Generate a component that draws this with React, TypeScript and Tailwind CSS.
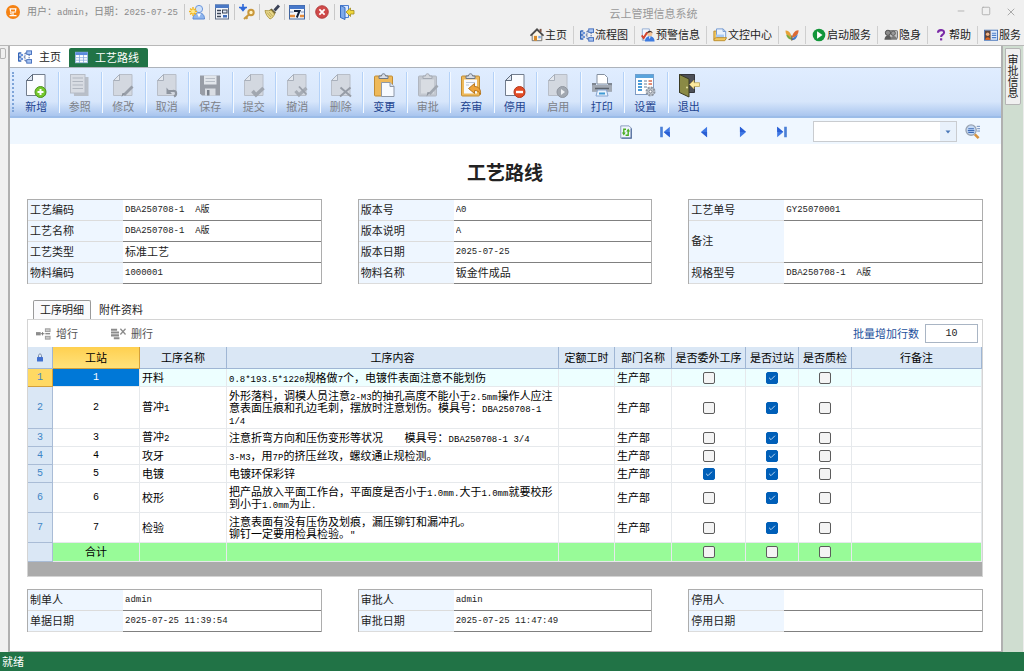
import type { ReactNode } from 'react'
import { clsx } from 'clsx'
import { Minus, Square, X, Check } from 'lucide-react'

interface Field {
  label: string
  value: string
  tall?: boolean
}

interface Process {
  station: number
  name: string
  content: string
  dept: string
  outsourced: boolean
  pass: boolean
  inspect: boolean
  height: string
}

const processes: Process[] = [
  { station: 1, name: '开料', content: '0.8*193.5*1220规格做7个，电镀件表面注意不能划伤', dept: '生产部', outsourced: false, pass: true, inspect: false, height: 'h-[18px]' },
  { station: 2, name: '普冲1', content: '外形落料，调模人员注意2-M3的抽孔高度不能小于2.5mm操作人应注\n意表面压痕和孔边毛刺，摆放时注意划伤。模具号：DBA250708-1\n1/4', dept: '生产部', outsourced: false, pass: true, inspect: false, height: 'h-[42px]' },
  { station: 3, name: '普冲2', content: '注意折弯方向和压伤变形等状况    模具号：DBA250708-1 3/4', dept: '生产部', outsourced: false, pass: true, inspect: false, height: 'h-[18px]' },
  { station: 4, name: '攻牙', content: '3-M3，用7P的挤压丝攻，螺纹通止规检测。', dept: '生产部', outsourced: false, pass: true, inspect: false, height: 'h-[18px]' },
  { station: 5, name: '电镀', content: '电镀环保彩锌', dept: '生产部', outsourced: true, pass: true, inspect: false, height: 'h-[18px]' },
  { station: 6, name: '校形', content: '把产品放入平面工作台，平面度是否小于1.0mm.大于1.0mm就要校形\n到小于1.0mm为止.', dept: '生产部', outsourced: false, pass: true, inspect: false, height: 'h-[30px]' },
  { station: 7, name: '检验', content: '注意表面有没有压伤及划痕，漏压铆钉和漏冲孔。\n铆钉一定要用检具检验。"', dept: '生产部', outsourced: false, pass: true, inspect: false, height: 'h-[30px]' },
]

const headFields: Field[][] = [
  [
    { label: '工艺编码', value: 'DBA250708-1  A版' },
    { label: '工艺名称', value: 'DBA250708-1  A版' },
    { label: '工艺类型', value: '标准工艺' },
    { label: '物料编码', value: '1000001' },
  ],
  [
    { label: '版本号', value: 'A0' },
    { label: '版本说明', value: 'A' },
    { label: '版本日期', value: '2025-07-25' },
    { label: '物料名称', value: '钣金件成品' },
  ],
  [
    { label: '工艺单号', value: 'GY25070001' },
    { label: '备注', value: '', tall: true },
    { label: '规格型号', value: 'DBA250708-1  A版' },
  ],
]

const footFields: Field[][] = [
  [
    { label: '制单人', value: 'admin' },
    { label: '单据日期', value: '2025-07-25 11:39:54' },
  ],
  [
    { label: '审批人', value: 'admin' },
    { label: '审批日期', value: '2025-07-25 11:47:49' },
  ],
  [
    { label: '停用人', value: '' },
    { label: '停用日期', value: '' },
  ],
]

/* Latin runs use the narrow fixed-width face */
function Mixed({ text }: { text: string }) {
  return (
    <>
      {text.split(/([\x20-\x7e]+)/).map((part, i) =>
        i % 2 === 1 ? (
          <span key={i} className="font-['Liberation_Mono',monospace] text-[9px] leading-none">{part}</span>
        ) : (
          part
        )
      )}
    </>
  )
}

/* ---------- small icons ---------- */

function Svg16({ children, className = 'size-4' }: { children: ReactNode; className?: string }) {
  return (
    <svg viewBox="0 0 16 16" className={clsx('shrink-0', className)} fill="none" aria-hidden="true">
      {children}
    </svg>
  )
}

function LogoIcon() {
  return (
    <Svg16 className="size-[14px]">
      <circle cx="8" cy="8" r="8" fill="#f58213" />
      <path d="M4 4.5h8M5 4.5v2.5M11 4.5v2.5M4.5 8h7M8 8v4M5 9.5l1.5 1M4 12.2h8" stroke="#fff" strokeWidth="1.3" />
    </Svg16>
  )
}

function FlowIcon() {
  return (
    <Svg16 className="size-[14px]">
      <path d="M.8 3v10M.8 3.500h3M.8 8h3M.8 12.500h3" stroke="#3465b8" strokeWidth="1.600" />
      <rect x="2.800" y="4.500" width="3" height="2.500" fill="#6a94dc" />
      <rect x="2.800" y="9" width="3" height="2.500" fill="#6a94dc" />
      <rect x="10" y="1" width="5.500" height="4" fill="#a9c6f4" stroke="#3a66b8" />
      <rect x="10" y="11" width="5.500" height="4" fill="#a9c6f4" stroke="#3a66b8" />
      <path d="M12.700 5.500v5M6.500 8h1.500M8 3.500h1.500M8 12.500h1.500M8 3.500v9" stroke="#2c4d92" strokeDasharray="1.500 1" />
    </Svg16>
  )
}

function UserStarIcon() {
  return (
    <Svg16>
      <circle cx="10" cy="5" r="3.600" fill="#cfe2fb" stroke="#6c97dc" />
      <path d="M4 15c0-4 2.500-6 6-6s5.500 2 5.500 6z" fill="#8fb6ee" stroke="#5a8ad4" />
      <path d="M8 9.500l2 4 2-4" fill="#fff" />
      <path d="M4 3v9M0 7.500h8M1.200 4.500l5.600 6M6.800 4.500l-5.600 6" stroke="#f2b41c" strokeWidth="1.400" />
      <circle cx="4" cy="7.500" r="2" fill="#ffe98a" />
    </Svg16>
  )
}

function FormIcon() {
  return (
    <Svg16>
      <rect x="1.500" y="1" width="13" height="14" fill="#f3f6fb" stroke="#5f6d84" />
      <rect x="1" y="0.500" width="14" height="3.500" fill="#4a78c4" />
      <path d="M3 6.500h4M3 9.500h4M3 12.500h4" stroke="#3c4657" strokeWidth="1.300" />
      <rect x="8.500" y="6" width="4.500" height="3" fill="#dfe8f5" stroke="#3c4657" />
      <rect x="9" y="11" width="4" height="2.500" fill="#3f6dbb" />
    </Svg16>
  )
}

function KeyIcon() {
  return (
    <Svg16>
      <path d="M4 0v6M1.500 3.500L4 6.500 6.500 3.500M0 3.500h8" stroke="#2f69d8" strokeWidth="1.600" />
      <circle cx="12" cy="8.500" r="2.700" stroke="#c9973a" strokeWidth="2" fill="#fff3c4" />
      <path d="M10 10.500L5 15M7 13.200l1.500 1.500" stroke="#c9973a" strokeWidth="2" />
    </Svg16>
  )
}

function BroomIcon() {
  return (
    <Svg16>
      <path d="M15 1.500l-4.500 5" stroke="#3a4257" strokeWidth="2.800" />
      <path d="M7.500 4.500l4.500 4-2 2.500L5 6.500z" fill="#6c6440" />
      <path d="M1 6.500c3 .5 4.500 0 6-.5l3.500 4c-.5 2-2 4-4.500 5C3.500 13 1.500 10 1 6.500z" fill="#e8d88c" stroke="#a58d2f" strokeWidth=".8" />
      <path d="M3 8.500l4 4.500M5 8l3.500 4" stroke="#b59d4a" strokeWidth=".8" />
    </Svg16>
  )
}

function CalendarIcon() {
  return (
    <Svg16>
      <rect x="0.500" y="1.500" width="15" height="13.500" fill="#f4f7fc" stroke="#41659e" />
      <rect x="0.500" y="1.500" width="15" height="3.500" fill="#4879cb" />
      <path d="M1 8h3.500M12 8h3" stroke="#a9b8cf" strokeWidth="1.500" />
      <path d="M1 12h5M11 12h4" stroke="#e58d3c" strokeWidth="2.500" />
      <path d="M5 7h5.500L7.800 13.500" stroke="#16233c" strokeWidth="2" />
    </Svg16>
  )
}

function CloseRedIcon() {
  return (
    <Svg16 className="size-[14px]">
      <circle cx="8" cy="8" r="7.200" fill="#cf4a4a" stroke="#b03636" />
      <path d="M5 5l6 6M11 5l-6 6" stroke="#fff" strokeWidth="2" />
    </Svg16>
  )
}

function ExitSmallIcon() {
  return (
    <Svg16>
      <path d="M1.500 1.500h8v12h-8z" fill="#dceaff" stroke="#4c7fd0" />
      <path d="M1.500 1.500l4.500 2v12l-4.500-2z" fill="#7ea9ea" stroke="#356abf" />
      <path d="M7 8l4.500-4v2.500h3.500v3.500h-3.500V12.500z" fill="#f0d63c" stroke="#a08a1c" strokeWidth=".8" />
    </Svg16>
  )
}

function HomeIcon() {
  return (
    <Svg16 className="size-[14px]">
      <path d="M2.500 8v6.500h11V8L8 2.500z" fill="#fdf6e6" stroke="#666" />
      <path d="M.5 8.800L8 1.500l7.500 7.300" stroke="#4a4a4a" strokeWidth="2" />
      <rect x="11" y="1" width="2.200" height="3.500" fill="#7c5140" />
      <rect x="4.500" y="9" width="3.500" height="5.500" fill="#d98b2b" />
      <rect x="9.500" y="9" width="2.800" height="2.800" fill="#7aa8e8" />
    </Svg16>
  )
}

function WarnIcon() {
  return (
    <Svg16 className="size-[14px]">
      <path d="M1.500 1h8v13h-8z" fill="#f3f7fd" stroke="#8da8d0" />
      <circle cx="10" cy="6.500" r="3" fill="#f3c49a" />
      <path d="M6.800 6c0-4 6.400-4 6.400 0l-2-1.500z" fill="#42302a" />
      <path d="M4.500 15.500c0-4 2.500-6 5.500-6s5.500 2 5.500 6z" fill="#3d7be0" />
      <path d="M9 9.800l1 3 1-3z" fill="#fff" />
      <path d="M.8 8.500L3 11.500 7 5" stroke="#d4452e" strokeWidth="2.200" />
    </Svg16>
  )
}

function DocCenterIcon() {
  return (
    <Svg16 className="size-[14px]">
      <path d="M1 3.500h4v10H1z" fill="#f1c55c" stroke="#b98a28" />
      <path d="M4 1h7.500l3 3v9H4z" fill="#eaf2fd" stroke="#6c94cf" />
      <path d="M11.500 1v3h3" stroke="#6c94cf" />
      <path d="M3.500 7.500h9v4.500h-9z" fill="#a9caf4" />
      <path d="M1 14.500h12.500l2-3.500H4L1.500 12z" fill="#f3c75f" stroke="#b98a28" />
    </Svg16>
  )
}

function ButterflyIcon() {
  return (
    <Svg16 className="size-[14px]">
      <path d="M7.500 11C7 6 4 2.500.5 3c0 4 2.500 6.500 7 8z" fill="#e8a237" />
      <path d="M7.500 11.500C5 9.500 2.500 7.500 1.200 7.500c.8 3.500 3.300 6 6.300 6z" fill="#7aa83e" />
      <path d="M8 11c.5-5 4-9 7.500-8.500C15.500 7 13 10 8 11z" fill="#dc6a34" />
      <path d="M8 12c2.500-1.500 5-3.500 6.500-5C14 11 11.500 14 8 13.800z" fill="#4579c8" />
      <path d="M7.800 8.500v6" stroke="#52451d" />
    </Svg16>
  )
}

function PlayIcon() {
  return (
    <Svg16 className="size-[14px]">
      <circle cx="8" cy="8" r="7.200" fill="#12963a" />
      <path d="M5.800 3.800L12 8l-6.200 4.200z" fill="#fff" />
    </Svg16>
  )
}

function HideIcon() {
  return (
    <Svg16 className="size-[14px]">
      <rect x="6" y="3" width="9.500" height="9" rx="1" fill="#c4c4c4" stroke="#666" />
      <circle cx="4.500" cy="5.500" r="3" fill="#8c8c8c" stroke="#444" />
      <circle cx="10.500" cy="6" r="2.500" fill="#9a9a9a" stroke="#555" />
      <path d="M.5 13.500c0-3.500 2-5 4-5s4 1.500 4 5z" fill="#5c5c5c" />
      <path d="M7.500 13.500c0-3 1.500-4.500 3.500-4.500s4 1.500 4 4.500z" fill="#7a7a7a" />
    </Svg16>
  )
}

function HelpIcon() {
  return (
    <Svg16 className="size-[14px]">
      <path d="M4.500 5.500C4.500 1.500 11.500 1.500 11.500 5c0 2.600-3.400 2.700-3.400 5.300" stroke="#7b2aa6" strokeWidth="2.400" />
      <rect x="6.900" y="11.700" width="2.500" height="2.500" fill="#7b2aa6" />
    </Svg16>
  )
}

function ServiceIcon() {
  return (
    <Svg16 className="size-[14px]">
      <rect x=".5" y="2.500" width="15" height="11.500" fill="#dfebfb" stroke="#3f6fb8" />
      <rect x="1" y="3" width="6.500" height="10.500" fill="#5b4339" />
      <circle cx="4.200" cy="7" r="2" fill="#f0b488" />
      <path d="M1.500 13.500c0-4 5.500-4 5.500 0z" fill="#e2641f" />
      <path d="M9 6h5M9 8.500h5M9 11h5" stroke="#4e80cb" strokeWidth="1.300" />
    </Svg16>
  )
}

function TableIcon() {
  return (
    <Svg16 className="size-[13px]">
      <rect x=".5" y="1.500" width="15" height="13" fill="#fff" stroke="#9db9e6" />
      <rect x=".5" y="1.500" width="15" height="3.500" fill="#5b8add" />
      <path d="M1 8.200h14M1 11.300h14M5.500 5v9.500M10.500 5v9.500" stroke="#86a9df" />
    </Svg16>
  )
}

function RefreshIcon() {
  return (
    <Svg16 className="size-[14px]">
      <path d="M2 1h9.500L14 3.500V15H2z" fill="#eef4fd" stroke="#7f94b8" />
      <path d="M14 4v11H3" stroke="#55709e" strokeWidth="1.400" />
      <path d="M8 4.800H5.500v5.500M7.500 11.700h3V6" stroke="#4aae22" strokeWidth="1.600" />
      <path d="M3.300 8.700h4.400L5.500 12zM8.300 7.300h4.400L10.500 4z" fill="#4aae22" />
    </Svg16>
  )
}

function NavIcon({ dir, bar }: { dir: 'left' | 'right'; bar?: boolean }) {
  return (
    <Svg16 className={clsx('size-[14px]', dir === 'right' && 'rotate-180')}>
      <path d={bar ? 'M13.500 2v12L6.500 8z' : 'M11.500 2v12L4.500 8z'} fill="#3f78e4" />
      <path d={bar ? 'M13.500 8v6L6.500 8z' : 'M11.500 8v6L4.500 8z'} fill="#2a5fd4" />
      {bar && <rect x="2.500" y="2" width="3" height="12" fill="#4a7fd6" />}
    </Svg16>
  )
}

function SearchIcon() {
  return (
    <Svg16 className="size-[15px]">
      <path d="M12.500 2.500h3.500M13 5h3M13 7.500h3" stroke="#6a86b8" />
      <circle cx="6.500" cy="6.500" r="5.500" fill="#c3d9f6" stroke="#9aa4b2" strokeWidth="1.400" />
      <path d="M3.500 5h6M3 7h7M3.500 9h6" stroke="#3f6cb6" strokeWidth="1.200" />
      <path d="M10.500 11l4 4" stroke="#d8933e" strokeWidth="2.800" />
    </Svg16>
  )
}

function AddRowIcon() {
  return (
    <Svg16 className="size-[15px]">
      <rect x="0" y="6.500" width="5" height="3.500" fill="#8c8c8c" />
      <path d="M5 8.200h4M7 6.500v3.500" stroke="#777" />
      <rect x="10" y="3" width="5" height="3" fill="#c9c9c9" stroke="#9b9b9b" />
      <path d="M10 8.200h5" stroke="#8b8b8b" strokeWidth="1.500" />
      <rect x="10" y="11" width="5" height="3" fill="#c9c9c9" stroke="#9b9b9b" />
    </Svg16>
  )
}

function DelRowIcon() {
  return (
    <Svg16 className="size-[15px]">
      <path d="M0 4h6.500M0 7h8.500M0 10h8.500M3 13h6" stroke="#8b8b8b" strokeWidth="2.200" />
      <path d="M10 3l5.500 6M15.500 3L10 9" stroke="#8b8b8b" strokeWidth="1.400" />
    </Svg16>
  )
}

/* ---------- toolbar icons ---------- */

function Svg22({ children }: { children: ReactNode }) {
  return (
    <svg viewBox="0 0 22 25" className="h-[25px] w-[22px]" fill="none" aria-hidden="true">
      {children}
    </svg>
  )
}

function Sheet({ off }: { off?: boolean }) {
  return (
    <>
      <path d="M7.500 1.500h12.500v21H1.500V7.500z" fill={off ? '#d3d8e0' : '#fafcff'} stroke={off ? '#b8bec8' : '#727d8d'} />
      <path d="M7.500 1.500v6h-6z" fill={off ? '#e4e8ee' : '#dde5f0'} stroke={off ? '#a9b0bb' : '#5f6b7c'} />
    </>
  )
}

function Clipboard({ off }: { off?: boolean }) {
  return (
    <>
      <rect x="1.500" y="3" width="18" height="20" rx="1" fill={off ? '#c3c8d0' : '#eeb95a'} stroke={off ? '#b0b6c0' : '#c08c34'} />
      <path d="M6 5.500V3h2.500c0-3 4-3 4 0H15v2.500z" fill={off ? '#d3d7dd' : '#d8dde6'} stroke={off ? '#a3a9b3' : '#6c7686'} />
    </>
  )
}

const toolbar: { label: string; off?: boolean; icon: ReactNode }[] = [
  {
    label: '新增',
    icon: (
      <>
        <Sheet />
        <circle cx="15.500" cy="19" r="5.500" fill="#74c62c" stroke="#4b961c" />
        <path d="M15.500 16v6M12.500 19h6" stroke="#fff" strokeWidth="2" />
      </>
    ),
  },
  {
    label: '参照',
    off: true,
    icon: (
      <>
        <path d="M4 4h15.500v19H5z" fill="#b9bfc8" />
        <rect x="1.500" y="1.500" width="14.500" height="18.500" fill="#d8dce3" stroke="#b6bcc6" />
        <path d="M3.500 5h10.500M3.500 8.500h10.500M3.500 12h10.500M3.500 15.500h10.500" stroke="#b0b6c0" />
      </>
    ),
  },
  {
    label: '修改',
    off: true,
    icon: (
      <>
        <Sheet off />
        <path d="M20.500 13.500l-8.500 8.500" stroke="#989ea8" strokeWidth="2.800" />
        <path d="M12.800 20.500l-3.300 3.500 1-4z" fill="#868d97" />
      </>
    ),
  },
  {
    label: '取消',
    off: true,
    icon: (
      <>
        <Sheet off />
        <path d="M12.500 18h4c4.500-1 4.500 4 1.500 5.500" stroke="#8e959f" strokeWidth="2.200" />
        <path d="M10.500 21v-6.500l5.500 6.500z" fill="#8e959f" />
      </>
    ),
  },
  {
    label: '保存',
    off: true,
    icon: (
      <>
        <path d="M1 2.500h20v20H3l-2-2z" fill="#989da6" />
        <rect x="5" y="2.500" width="12.500" height="9" fill="#e2e6eb" />
        <path d="M6.500 5.500h9.500M6.500 8.500h9.500" stroke="#b8bec7" />
        <rect x="6" y="15.500" width="10.500" height="7" fill="#d9dde3" />
        <rect x="8" y="17" width="2.500" height="5.500" fill="#7a818b" />
      </>
    ),
  },
  {
    label: '提交',
    off: true,
    icon: (
      <>
        <Sheet off />
        <path d="M9.500 18l3.500 4 7.500-7" stroke="#a1a7b0" strokeWidth="3.600" />
      </>
    ),
  },
  {
    label: '撤消',
    off: true,
    icon: (
      <>
        <Sheet off />
        <path d="M9.500 18l3.500 4 7.500-7" stroke="#a6acb5" strokeWidth="3.200" />
        <path d="M13 13.500l7.500 8" stroke="#9aa0aa" strokeWidth="1.800" />
      </>
    ),
  },
  {
    label: '删除',
    off: true,
    icon: (
      <>
        <Sheet off />
        <path d="M10.500 14.500l10.500 9M20.500 14.500l-10.500 9" stroke="#969ca6" strokeWidth="2" />
      </>
    ),
  },
  {
    label: '变更',
    icon: (
      <>
        <Clipboard />
        <path d="M8.500 9.500h8.500l4 4v10h-12.500z" fill="#f7faff" stroke="#8e98a8" />
        <path d="M17 9.500v4h4" fill="#d8e1ee" stroke="#8e98a8" />
      </>
    ),
  },
  {
    label: '审批',
    off: true,
    icon: (
      <>
        <Clipboard off />
        <rect x="4" y="6.500" width="13" height="14" fill="#d8dce2" />
        <path d="M20.500 12.500l-8 8.500" stroke="#a1a7b0" strokeWidth="2.600" />
        <path d="M13 19.500l-3.500 4 1-4.500z" fill="#8e959f" />
      </>
    ),
  },
  {
    label: '弃审',
    icon: (
      <>
        <Clipboard />
        <rect x="4" y="6.500" width="13" height="14" fill="#f7faff" />
        <path d="M6 9.500h9M6 12h3" stroke="#b9c4d4" />
        <path d="M8.500 15.500l6-5v3c4.500 0 6.500 3 6 8-1.500-3-3-4-6-4v3z" fill="#eda33a" stroke="#b06d12" strokeWidth=".9" />
      </>
    ),
  },
  {
    label: '停用',
    icon: (
      <>
        <Sheet />
        <circle cx="15.500" cy="19" r="5.500" fill="#e24c26" stroke="#b5371a" />
        <path d="M12 19h7" stroke="#fff" strokeWidth="2.400" />
      </>
    ),
  },
  {
    label: '启用',
    off: true,
    icon: (
      <>
        <Sheet off />
        <circle cx="15.500" cy="19" r="5.500" fill="#a2a8b1" stroke="#8f959f" />
        <path d="M14 16l4 3-4 3z" fill="#eef0f3" />
      </>
    ),
  },
  {
    label: '打印',
    icon: (
      <>
        <path d="M6 1.500h7.500l3 3V11H6z" fill="#fff" stroke="#8490a0" />
        <path d="M1 10h4v3h12v-3h4v8.500H1z" fill="#7f8792" />
        <rect x="1" y="12" width="20" height="6.500" rx="1" fill="#a2a9b3" />
        <path d="M4 15.500h14" stroke="#5b626d" strokeWidth="1.500" />
        <path d="M6.500 17h9l1.500 6H5z" fill="#eaf3fd" stroke="#86a4cf" />
        <path d="M8 20.500h6" stroke="#3f9ad4" strokeWidth="2" />
      </>
    ),
  },
  {
    label: '设置',
    icon: (
      <>
        <rect x="1.500" y="1.500" width="18" height="20" fill="#fff" stroke="#7f9cc4" />
        <rect x="1.500" y="1.500" width="18" height="3.500" fill="#5aa4dc" />
        <path d="M4 8h4M4 11h4M4 14h4M4 17h4" stroke="#4a9bd8" strokeWidth="1.900" />
        <path d="M10 8h3M10 11h3M10 14h3" stroke="#9aa9bd" strokeWidth="1.600" />
        <path d="M14.500 8h3.500M14.500 11h3.500" stroke="#d8684c" strokeWidth="1.600" />
        <circle cx="16.500" cy="18.500" r="4" fill="#c3c8cf" stroke="#8e959f" strokeWidth="2" strokeDasharray="2 1.100" />
        <circle cx="16.500" cy="18.500" r="1.500" fill="#fff" stroke="#7b828d" />
      </>
    ),
  },
  {
    label: '退出',
    icon: (
      <>
        <path d="M1.500 1.500h15v18h-15z" fill="#4d5057" stroke="#34363c" />
        <path d="M1.500 1.500L11 6v18l-9.500-4.500z" fill="#8a8a45" stroke="#3a3a22" />
        <circle cx="9" cy="14.500" r="1" fill="#e6e2a0" />
        <path d="M11.500 11.500l4.500-4.500v2.700h5.500v3.800H16V16z" fill="#fbe9a0" stroke="#b9a45c" strokeWidth=".8" />
      </>
    ),
  },
]

const quickBar: { label: string; icon: ReactNode }[] = [
  { label: '切换用户', icon: <UserStarIcon /> },
  { label: '表单', icon: <FormIcon /> },
  { label: '修改密码', icon: <KeyIcon /> },
  { label: '清理', icon: <BroomIcon /> },
  { label: '日历', icon: <CalendarIcon /> },
  { label: '关闭', icon: <CloseRedIcon /> },
  { label: '退出系统', icon: <ExitSmallIcon /> },
]

const menu: { label: string; icon: ReactNode; iconOnly?: boolean }[] = [
  { label: '主页', icon: <HomeIcon /> },
  { label: '流程图', icon: <FlowIcon /> },
  { label: '预警信息', icon: <WarnIcon /> },
  { label: '文控中心', icon: <DocCenterIcon /> },
  { label: '皮肤', icon: <ButterflyIcon />, iconOnly: true },
  { label: '启动服务', icon: <PlayIcon /> },
  { label: '隐身', icon: <HideIcon /> },
  { label: '帮助', icon: <HelpIcon /> },
  { label: '服务', icon: <ServiceIcon /> },
]

/* ---------- pieces ---------- */

function FieldGroup({ fields }: { fields: Field[] }) {
  return (
    <div className="border-t border-r border-l border-[#adadad]">
      {fields.map(f => (
        <label key={f.label} className={clsx('flex', f.tall ? 'h-[42px]' : 'h-[21px]')}>
          <span className="flex w-[95px] shrink-0 items-center border-b border-[#dcdcdc] bg-[#eef6ff] pb-px pl-[2px]">{f.label}</span>
          <input
            readOnly
            defaultValue={f.value}
            className={clsx(
              'min-w-0 flex-1 border-b border-[#808080] bg-white pl-[2px] outline-none',
              /^[\x20-\x7e]/.test(f.value) && "font-['Liberation_Mono','Noto_Sans_CJK_SC',monospace] text-[9px]"
            )}
          />
        </label>
      ))}
    </div>
  )
}

function Tick({ label, checked }: { label: string; checked: boolean }) {
  return (
    <label className="mx-auto grid size-3 place-items-center">
      <input
        type="checkbox"
        aria-label={label}
        defaultChecked={checked}
        className="peer col-start-1 row-start-1 size-3 appearance-none rounded-[2px] border border-[#5c5c5c] bg-[#f4f4f4] checked:border-[#005fb8] checked:bg-[#005fb8]"
      />
      <Check strokeWidth={3} className="pointer-events-none invisible col-start-1 row-start-1 size-2 text-[#b9d6f2] peer-checked:visible" />
    </label>
  )
}

function NavButton({ label, children }: { label: string; children: ReactNode }) {
  return (
    <button aria-label={label} className="flex w-[39px] items-center justify-center">
      {children}
    </button>
  )
}

const headCell = 'border-r border-b border-[#9fb6d4] bg-[#dae7f5] font-normal'
const cell = 'border-r border-b border-[#e6e9ec]'

export default function App() {
  return (
    <div className="flex min-h-screen flex-col bg-[#f0f0f0] font-['Liberation_Sans','Noto_Sans_CJK_SC',sans-serif] text-[11px] leading-3 text-[#222]">
      {/* Title bar */}
      <header className="border-b border-[#b8b8b8]">
        <div className="flex h-6 items-center">
          <div className="flex items-center pl-[6px] text-[10px] text-[#8a8a8a]">
            <LogoIcon />
            <span className="ml-[7px] w-[157px] whitespace-nowrap">
              <Mixed text="用户：admin，日期：2025-07-25" />
            </span>
            {quickBar.map(q => (
              <button key={q.label} aria-label={q.label} className="flex h-4 w-[25px] items-center justify-center border-l border-[#c8c8c8]">
                {q.icon}
              </button>
            ))}
          </div>
          <div className="flex-1 pt-1 text-center text-[#999]">云上管理信息系统</div>
          <div className="flex text-[#aaa]">
            <button aria-label="最小化" className="flex w-[25px] justify-center"><Minus className="size-[10px]" /></button>
            <button aria-label="最大化" className="flex w-[25px] justify-center"><Square className="size-[10px]" /></button>
            <button aria-label="关闭窗口" className="flex w-[26px] justify-center"><X className="size-3" /></button>
          </div>
        </div>
        <nav className="flex h-[21px] items-center justify-end">
          {menu.map((m, i) => (
            <button
              key={m.label}
              aria-label={m.label}
              className={clsx('flex h-[18px] items-center gap-px px-[6px]', i > 0 && 'border-l border-[#cfcfcf]', i === menu.length - 1 && 'pr-[3px]')}
            >
              {m.icon}
              {!m.iconOnly && <span className="whitespace-nowrap">{m.label}</span>}
            </button>
          ))}
        </nav>
      </header>

      <div className="flex flex-1">
        <aside className="w-2 pt-[2px]">
          <div className="h-[11px] w-[6px] rounded-r-xs border border-[#b5b5b5]" />
        </aside>

        <main className="flex min-w-0 flex-1 flex-col border-r-2 border-b border-l-2 border-[#b0b0b0] bg-white">
          {/* Page tabs */}
          <div className="flex h-[22px] items-end border-b border-[#adb3bb]">
            <button className="flex h-5 items-center gap-[7px] px-2">
              <FlowIcon />
              主页
            </button>
            <button className="flex h-[19px] items-center gap-[7px] rounded-t-xs bg-[#217346] px-[6px] pr-[9px] text-white">
              <TableIcon />
              工艺路线
            </button>
          </div>

          {/* Toolbar */}
          <div className="flex h-[50px] border-b-2 border-[#9bbce8] bg-linear-to-b from-[#e0edff] via-[#d7e6fb] via-70% to-[#a9c5ee]">
            <div className="my-1 ml-[2px] w-0 border-l-2 border-dotted border-[#7ea4d8]" />
            <div className="ml-px grid w-[696px] grid-cols-16 py-1">
              {toolbar.map(t => (
                <button
                  key={t.label}
                  disabled={t.off}
                  className={clsx(
                    'flex flex-col items-center gap-[3px] border-r border-[#b4d2f8] pt-px shadow-[1px_0_0_#f4f9ff] last:border-transparent last:shadow-none',
                    t.off ? 'text-[#7d8188]' : 'text-[#1e4490]'
                  )}
                >
                  <Svg22>{t.icon}</Svg22>
                  <span>{t.label}</span>
                </button>
              ))}
            </div>
          </div>

          {/* Record navigator */}
          <div className="flex h-[26px] items-center justify-end bg-[#eff7ff] pt-px pr-[21px]">
            <NavButton label="刷新"><RefreshIcon /></NavButton>
            <NavButton label="首条"><NavIcon dir="left" bar /></NavButton>
            <NavButton label="上一条"><NavIcon dir="left" /></NavButton>
            <NavButton label="下一条"><NavIcon dir="right" /></NavButton>
            <NavButton label="末条"><NavIcon dir="right" bar /></NavButton>
            <div className="ml-3 grid h-[21px] w-36 border border-[#c9ccd0] bg-white">
              <select aria-label="查询方案" className="col-start-1 row-start-1 appearance-none px-1 outline-none">
                <option />
              </select>
              <span className="pointer-events-none col-start-1 row-start-1 flex w-4 items-center justify-center justify-self-end bg-[#e8f1fb]">
                <svg viewBox="0 0 6 4" className="h-1 w-[6px]"><path d="M.5.500h5L3 3.500z" fill="#4a78b8" /></svg>
              </span>
            </div>
            <button aria-label="查询" className="ml-2"><SearchIcon /></button>
          </div>

          {/* Document */}
          <div className="flex flex-1 flex-col pr-[18px] pb-[18px] pl-[17px]">
            <h1 className="pt-[18px] pb-[17px] text-center font-['Noto_Sans_CJK_SC',sans-serif] text-[19px] leading-5 font-bold text-[#222]">工艺路线</h1>

            <div className="grid grid-cols-3 gap-9">
              {headFields.map((g, i) => <FieldGroup key={i} fields={g} />)}
            </div>

            <div className="mt-4 flex h-[19px] pl-[6px]" role="tablist">
              <button role="tab" aria-selected="true" className="rounded-t-xs border border-b-0 border-[#9a9a9a] bg-[#fafafc] px-[6px]">工序明细</button>
              <button role="tab" aria-selected="false" className="px-2">附件资料</button>
            </div>

            <section className="border border-[#d4d4d4]">
              <div className="flex h-[27px] items-center px-[8px] text-[#555]">
                <button className="flex items-center gap-[5px]"><AddRowIcon />增行</button>
                <button className="ml-[33px] flex items-center gap-[5px]"><DelRowIcon />删行</button>
                <label className="ml-auto flex items-center gap-[6px] text-[#23509c]">
                  批量增加行数
                  <input
                    defaultValue="10"
                    className="-mr-1 h-[19px] w-[53px] border border-[#a9b5c4] bg-white text-center font-['Liberation_Mono',monospace] text-[10px] text-[#222] outline-none"
                  />
                </label>
              </div>

              <table className="w-full table-fixed border-separate border-spacing-0 text-black">
                <colgroup>
                  <col className="w-[25px]" />
                  <col className="w-[87px]" />
                  <col className="w-[87px]" />
                  <col />
                  <col className="w-[56px]" />
                  <col className="w-[57px]" />
                  <col className="w-[74px]" />
                  <col className="w-[53px]" />
                  <col className="w-[53px]" />
                  <col className="w-[130px]" />
                </colgroup>
                <thead>
                  <tr className="h-[22px]">
                    <th className={headCell}>
                      <svg viewBox="0 0 8 9" className="mx-auto h-[9px] w-2" fill="none" aria-label="锁定">
                        <path d="M2.500 4V2.500c0-2 3-2 3 0V4" stroke="#7a8ba8" />
                        <rect x="1" y="4" width="6" height="4.500" rx=".5" fill="#3f6fd0" />
                      </svg>
                    </th>
                    <th className="border-r border-b border-[#d3a03a] bg-linear-to-b from-[#ffd04f] to-[#ffe27a] font-normal">工站</th>
                    {['工序名称', '工序内容', '定额工时', '部门名称', '是否委外工序', '是否过站', '是否质检', '行备注'].map(h => (
                      <th key={h} className={clsx(headCell, 'whitespace-nowrap')}>{h}</th>
                    ))}
                  </tr>
                </thead>
                <tbody>
                  {processes.map((p, i) => (
                    <tr key={p.station} className={clsx(p.height, i === 0 && 'bg-[#edffff]')}>
                      <th
                        className={clsx(
                          "border-r border-b font-['Liberation_Mono',monospace] text-[10px] font-normal text-[#3f86c6]",
                          i === 0 ? 'border-[#d3a03a] bg-[#ffd963]' : 'border-[#a9bcd6] bg-[#dae7f5]'
                        )}
                      >
                        {p.station}
                      </th>
                      <td
                        className={clsx(
                          cell,
                          "text-center font-['Liberation_Mono',monospace] text-[10px]",
                          i === 0 && 'bg-[#0078d7] text-white'
                        )}
                      >
                        {p.station}
                      </td>
                      <td className={clsx(cell, 'pl-[2px]')}><Mixed text={p.name} /></td>
                      <td className={clsx(cell, 'pl-[2px]')}>
                        {p.content.split('\n').map(line => (
                          <p key={line} className="h-3 whitespace-pre"><Mixed text={line} /></p>
                        ))}
                      </td>
                      <td className={cell} />
                      <td className={clsx(cell, 'pl-[2px]')}>{p.dept}</td>
                      <td className={cell}><Tick label={`委外 ${p.station}`} checked={p.outsourced} /></td>
                      <td className={cell}><Tick label={`过站 ${p.station}`} checked={p.pass} /></td>
                      <td className={cell}><Tick label={`质检 ${p.station}`} checked={p.inspect} /></td>
                      <td className={cell} />
                    </tr>
                  ))}
                </tbody>
                <tfoot>
                  <tr className="h-[19px] bg-[#98fb98]">
                    <th className="border-r border-b border-[#a9bcd6] bg-[#dae7f5]" />
                    <td className={clsx(cell, 'text-center')}>合计</td>
                    <td className={cell} />
                    <td className={cell} />
                    <td className={cell} />
                    <td className={cell} />
                    <td className={cell}><Tick label="委外合计" checked={false} /></td>
                    <td className={cell}><Tick label="过站合计" checked={false} /></td>
                    <td className={cell}><Tick label="质检合计" checked={false} /></td>
                    <td className={cell} />
                  </tr>
                </tfoot>
              </table>
              <div className="h-[14px] bg-[#ababab]" />
            </section>

            <div className="mt-3 grid grid-cols-3 gap-9">
              {footFields.map((g, i) => <FieldGroup key={i} fields={g} />)}
            </div>
          </div>
        </main>

        {/* Docked side tab */}
        <aside className="w-[21px] border-r border-[#ececec] bg-[#cfddd0] pr-[2px] pl-[2px]">
          <button className="mt-[2px] flex h-[57px] w-full flex-col items-center justify-center rounded-r-xs border border-[#b5b5b5] bg-[#f0f0f0] leading-[11px]">
            {['审', '批', '信', '息'].map(c => <span key={c}>{c}</span>)}
          </button>
        </aside>
      </div>

      <footer className="flex h-[19px] items-center bg-[#217346] pl-[2px] text-white">就绪</footer>
    </div>
  )
}
